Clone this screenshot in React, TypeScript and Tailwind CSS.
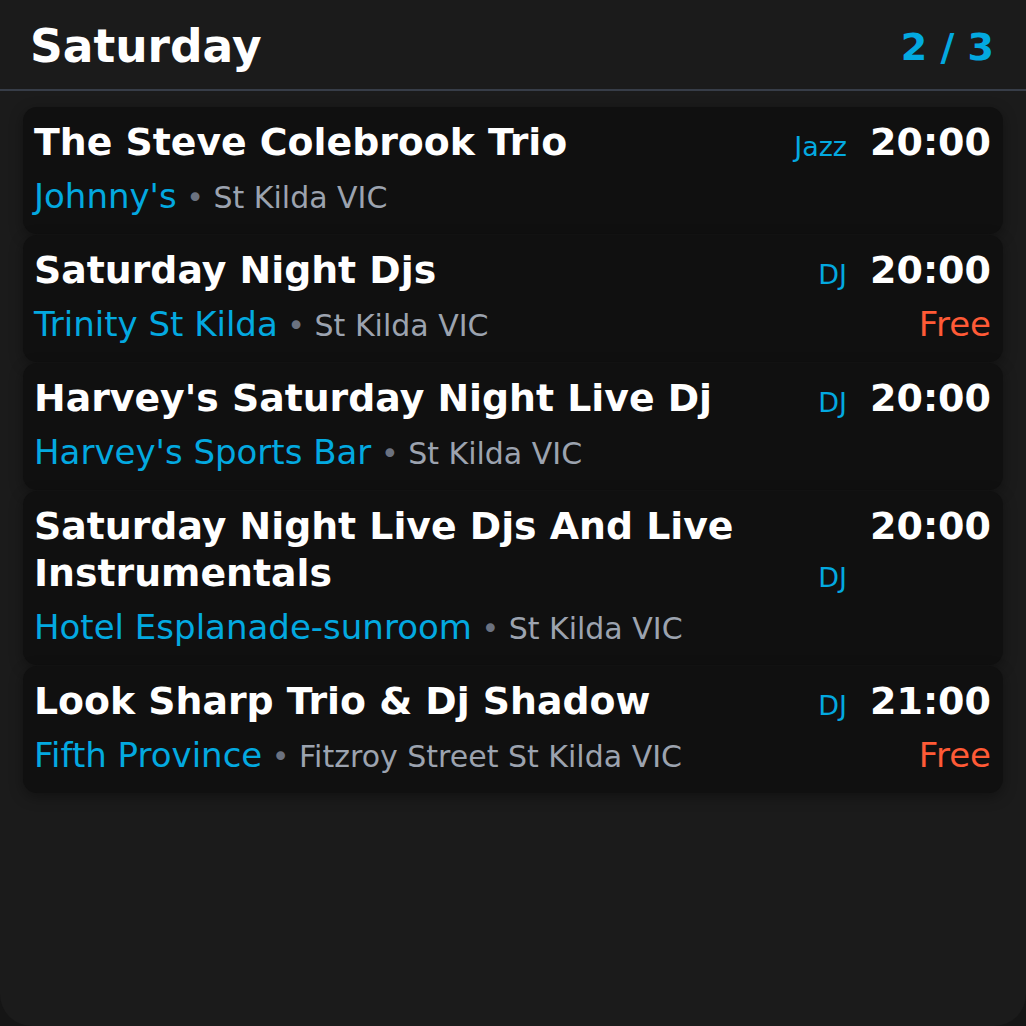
import React from "react";

type Gig = {
  title: string;
  venue: string;
  location: string;
  tag: string;
  time: string;
  free?: boolean;
};

const gigs: Gig[] = [
  { title: "The Steve Colebrook Trio", venue: "Johnny's", location: "St Kilda VIC", tag: "Jazz", time: "20:00" },
  { title: "Saturday Night Djs", venue: "Trinity St Kilda", location: "St Kilda VIC", tag: "DJ", time: "20:00", free: true },
  { title: "Harvey's Saturday Night Live Dj", venue: "Harvey's Sports Bar", location: "St Kilda VIC", tag: "DJ", time: "20:00" },
  { title: "Saturday Night Live Djs And Live Instrumentals", venue: "Hotel Esplanade-sunroom", location: "St Kilda VIC", tag: "DJ", time: "20:00" },
  { title: "Look Sharp Trio & Dj Shadow", venue: "Fifth Province", location: "Fitzroy Street St Kilda VIC", tag: "DJ", time: "21:00", free: true },
];

export default function App() {
  return (
    <div
      className="w-[1026px] h-[1026px] bg-[#151515]"
      style={{ fontFamily: '"DejaVu Sans", sans-serif' }}
    >
      <div className="h-full bg-[#1b1b1b] rounded-b-[32px] flex flex-col">
        <div className="flex items-center justify-between pl-[30px] pr-[32px] pt-[19px] pb-[15px] border-b-2 border-[#373d48]">
          <div className="text-[45.5px] leading-[55px] font-bold text-white">Saturday</div>
          <div className="text-[38px] leading-[46px] font-bold text-[#03a9e0]">2 / 3</div>
        </div>
        <div className="flex flex-col gap-[1px] px-[23px] pt-[16px]">
          {gigs.map((g, i) => (
            <div
              key={i}
              className="bg-[#101010] rounded-[14px] pl-[11px] pr-[12px] pt-[12px] pb-[11.5px] shadow-[0_4px_14px_rgba(0,0,0,0.35)]"
            >
              <div className="flex items-start">
                <div className="flex-1 text-[37.8px] leading-[47px] font-bold text-white pr-[40px]">
                  {g.title}
                </div>
                <div className="self-end text-[27px] leading-[38px] text-[#03a9e0] mr-[23px]">{g.tag}</div>
                <div className="text-[38px] leading-[47px] font-bold text-white">{g.time}</div>
              </div>
              <div className="flex items-baseline justify-between mt-[4.5px] text-[34px] leading-[50px]">
                <div>
                  <span className="text-[#03a9e0]">{g.venue}</span>
                  <span className="text-[30px] text-[#6b7280]"> • </span>
                  <span className="text-[30px] text-[#9ca3af]">{g.location}</span>
                </div>
                {g.free && <div className="text-[#ff5a36]">Free</div>}
              </div>
            </div>
          ))}
        </div>
      </div>
    </div>
  );
}
